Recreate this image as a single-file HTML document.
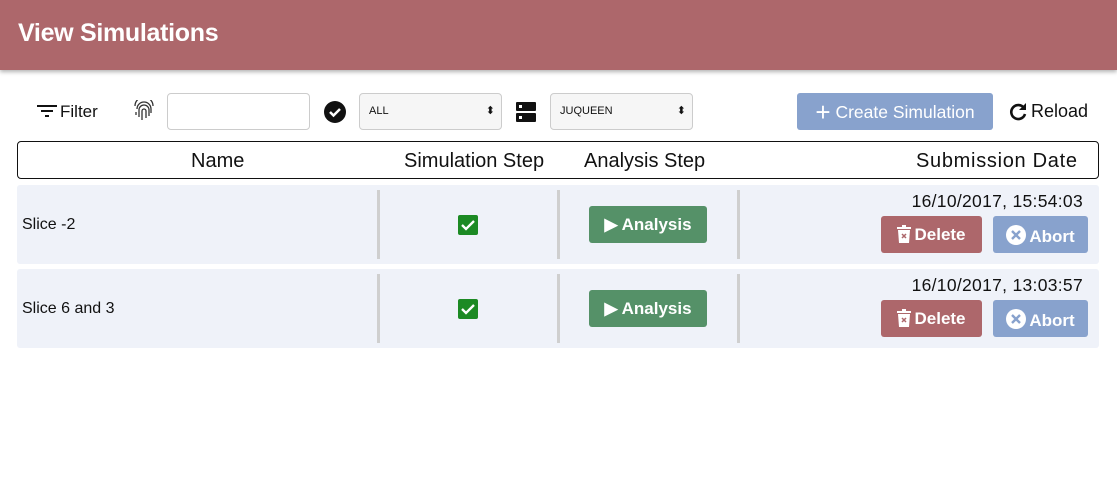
<!DOCTYPE html>
<html><head><style>
*{box-sizing:border-box;margin:0;padding:0}
body{width:1117px;height:483px;background:#fff;font-family:"Liberation Sans",sans-serif;position:relative;overflow:hidden;color:#111}
.hdr{position:absolute;left:0;top:0;width:1117px;height:70px;background:#ad676b;box-shadow:0 2px 4px rgba(0,0,0,.3)}
.hdr h1{position:absolute;left:18px;top:19px;color:#fff;font-size:25px;font-weight:bold;letter-spacing:-0.3px}
.a{position:absolute}
.inp{border:1px solid #ccc;border-radius:4px;background:#fff}
.sel{border:1px solid #ccc;border-radius:4px;background:#f6f6f6;font-size:11px;padding:11px 0 0 9px}
.sel:after{content:"⬍";position:absolute;right:6px;top:10px;font-size:11px}
.btn{position:absolute;color:#fff;font-weight:bold;font-size:17px;border-radius:3px;text-align:center}
.row{position:absolute;left:17px;width:1082px;height:79px;background:#eff2f9;border-radius:3px}
.sep{position:absolute;top:5px;width:3px;height:69px;background:#cfcfcf}
.chk{position:absolute;left:441px;top:30px;width:20px;height:20px;background:#1c8a24;border-radius:2px}
.ic{display:inline-block;vertical-align:-3px;margin-right:3px}
</style></head><body>
<div class="hdr"><h1>View Simulations</h1></div>
<svg class="a" style="left:36px;top:103px" width="22" height="16"><path d="M1 3h20M5 8h12M9 13h4" stroke="#111" stroke-width="2"/></svg>
<div class="a" style="left:60px;top:102px;font-size:17px">Filter</div>
<svg class="a" style="left:133px;top:100px" width="22" height="24" fill="none" stroke="#333" stroke-width="1.3"><path d="M4 9a7 7 0 0 1 14 0v4M6 17v-7a5 5 0 0 1 10 0v6M9 20v-9a2 2 0 0 1 4 0v7M3 12v3M2 6a9 9 0 0 1 18 0"/></svg>
<div class="a inp" style="left:167px;top:93px;width:143px;height:37px"></div>
<svg class="a" style="left:324px;top:101px" width="22" height="22"><circle cx="11" cy="11" r="11" fill="#111"/><path d="M6 11l3.5 3.5L16 8" stroke="#fff" stroke-width="2.5" fill="none"/></svg>
<div class="a sel" style="left:359px;top:93px;width:143px;height:37px">ALL</div>
<svg class="a" style="left:515px;top:101px" width="22" height="22"><rect x="1" y="1" width="20" height="9" rx="1" fill="#111"/><rect x="1" y="12" width="20" height="9" rx="1" fill="#111"/><rect x="4" y="4" width="3" height="3" fill="#fff"/><rect x="4" y="15" width="3" height="3" fill="#fff"/></svg>
<div class="a sel" style="left:550px;top:93px;width:143px;height:37px">JUQUEEN</div>
<div class="btn" style="left:797px;top:93px;width:196px;height:37px;background:#88a2cd;font-weight:normal;font-size:17.5px;padding-top:9px"><span style="font-size:26px;line-height:17px;vertical-align:-3px">+</span> Create Simulation</div>
<svg class="a" style="left:1008px;top:102px" width="20" height="20" fill="none" stroke="#111" stroke-width="2.6"><path d="M16 6a7 7 0 1 0 1 6"/><path d="M18 1v7h-7z" fill="#111" stroke="none"/></svg>
<div class="a" style="left:1031px;top:101px;font-size:18px">Reload</div>
<div class="a" style="left:17px;top:141px;width:1082px;height:38px;border:1px solid #111;border-radius:4px;font-size:20px">
<span class="a" style="left:173px;top:8px">Name</span>
<span class="a" style="left:386px;top:8px">Simulation Step</span>
<span class="a" style="left:566px;top:8px">Analysis Step</span>
<span class="a" style="left:898px;top:8px;letter-spacing:0.7px">Submission Date</span></div>
<div class="row" style="top:185px">
<span class="a" style="left:5px;top:31px;font-size:16px">Slice -2</span>
<div class="sep" style="left:360px"></div><div class="chk"><svg width="20" height="20"><path d="M4 10l4 4 8-8" stroke="#fff" stroke-width="2.3" fill="none"/></svg></div>
<div class="sep" style="left:540px"></div>
<div class="btn" style="left:572px;top:21px;width:118px;height:37px;background:#559168;padding-top:9px">▶ Analysis</div>
<div class="sep" style="left:720px"></div>
<span class="a" style="right:16px;top:6px;font-size:17.5px;letter-spacing:0.3px">16/10/2017, 15:54:03</span>
<div class="btn" style="left:864px;top:31px;width:101px;height:37px;background:#ad676b;padding-top:9px"><svg class="ic" width="14" height="18"><rect x="0" y="2" width="14" height="2" fill="#fff"/><rect x="5" y="0" width="4" height="2" fill="#fff"/><path d="M1 5h12l-1 13H2z" fill="#fff"/><path d="M5 9l4 4M9 9l-4 4" stroke="#ad676b" stroke-width="1.5"/></svg>Delete</div>
<div class="btn" style="left:976px;top:31px;width:95px;height:37px;background:#88a2cd;padding-top:9px"><svg class="ic" width="20" height="20"><circle cx="10" cy="10" r="10" fill="#fff"/><path d="M6 6l8 8M14 6l-8 8" stroke="#88a2cd" stroke-width="2.4"/></svg>Abort</div>
</div>
<div class="row" style="top:269px">
<span class="a" style="left:5px;top:31px;font-size:16px">Slice 6 and 3</span>
<div class="sep" style="left:360px"></div><div class="chk"><svg width="20" height="20"><path d="M4 10l4 4 8-8" stroke="#fff" stroke-width="2.3" fill="none"/></svg></div>
<div class="sep" style="left:540px"></div>
<div class="btn" style="left:572px;top:21px;width:118px;height:37px;background:#559168;padding-top:9px">▶ Analysis</div>
<div class="sep" style="left:720px"></div>
<span class="a" style="right:16px;top:6px;font-size:17.5px;letter-spacing:0.3px">16/10/2017, 13:03:57</span>
<div class="btn" style="left:864px;top:31px;width:101px;height:37px;background:#ad676b;padding-top:9px"><svg class="ic" width="14" height="18"><rect x="0" y="2" width="14" height="2" fill="#fff"/><rect x="5" y="0" width="4" height="2" fill="#fff"/><path d="M1 5h12l-1 13H2z" fill="#fff"/><path d="M5 9l4 4M9 9l-4 4" stroke="#ad676b" stroke-width="1.5"/></svg>Delete</div>
<div class="btn" style="left:976px;top:31px;width:95px;height:37px;background:#88a2cd;padding-top:9px"><svg class="ic" width="20" height="20"><circle cx="10" cy="10" r="10" fill="#fff"/><path d="M6 6l8 8M14 6l-8 8" stroke="#88a2cd" stroke-width="2.4"/></svg>Abort</div>
</div>
</body></html>
